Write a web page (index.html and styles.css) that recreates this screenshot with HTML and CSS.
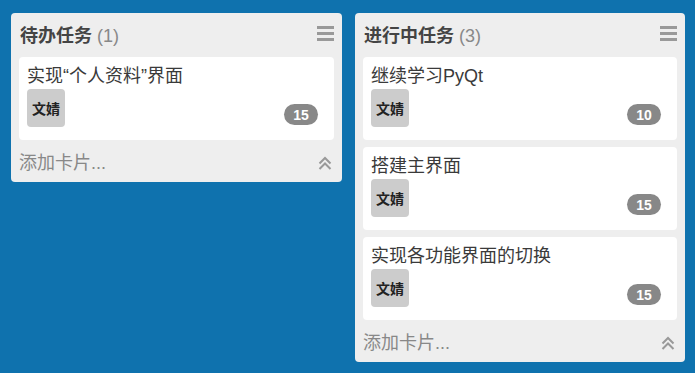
FILE: index.html
```html
<!DOCTYPE html>
<html lang="zh-CN">
<head>
  <meta charset="UTF-8">
  <title>任务看板</title>
  <link rel="stylesheet" href="styles.css">
</head>
<body>
  <div class="board">
    <div class="column col-todo">
      <div class="column-head">
        <h2>待办任务 <span class="count">(1)</span></h2>
        <span class="menu"><i></i><i></i><i></i></span>
      </div>
      <div class="cards">
        <div class="card">
          <div class="card-title">实现“个人资料”界面</div>
          <div class="card-row">
            <span class="avatar">文婧</span>
            <span class="badge">15</span>
          </div>
        </div>
      </div>
      <div class="column-foot">
        <span>添加卡片...</span>
        <svg class="fold" width="14" height="14" viewBox="0 0 14 14"><path d="M1.5 7.5 L7 2 L12.5 7.5 M1.5 13 L7 7.5 L12.5 13" fill="none" stroke="#999" stroke-width="2"/></svg>
      </div>
    </div>

    <div class="column col-doing">
      <div class="column-head">
        <h2>进行中任务 <span class="count">(3)</span></h2>
        <span class="menu"><i></i><i></i><i></i></span>
      </div>
      <div class="cards">
        <div class="card">
          <div class="card-title">继续学习PyQt</div>
          <div class="card-row">
            <span class="avatar">文婧</span>
            <span class="badge">10</span>
          </div>
        </div>
        <div class="card">
          <div class="card-title">搭建主界面</div>
          <div class="card-row">
            <span class="avatar">文婧</span>
            <span class="badge">15</span>
          </div>
        </div>
        <div class="card">
          <div class="card-title">实现各功能界面的切换</div>
          <div class="card-row">
            <span class="avatar">文婧</span>
            <span class="badge">15</span>
          </div>
        </div>
      </div>
      <div class="column-foot">
        <span>添加卡片...</span>
        <svg class="fold" width="14" height="14" viewBox="0 0 14 14"><path d="M1.5 7.5 L7 2 L12.5 7.5 M1.5 13 L7 7.5 L12.5 13" fill="none" stroke="#999" stroke-width="2"/></svg>
      </div>
    </div>
  </div>
</body>
</html>
```

FILE: styles.css
```css
body {
  margin: 0;
  background: #0f72ae;
  font-family: "Liberation Sans", "Noto Sans CJK SC", sans-serif;
  color: #333;
}
.board {
  display: flex;
  align-items: flex-start;
  gap: 13px;
  padding: 13px 10px 0 11px;
}
.column {
  width: 331px;
  background: #eeeeee;
  border-radius: 4px;
}
.col-doing {
  width: 330px;
}
.column-head {
  display: flex;
  align-items: center;
  justify-content: space-between;
  height: 41px;
  padding: 0 8px 3px 9px;
}
.column-head h2 {
  margin: 0;
  font-size: 18px;
  font-weight: bold;
  color: #444;
}
.count {
  font-weight: normal;
  color: #888;
}
.menu {
  display: flex;
  flex-direction: column;
  gap: 3px;
  width: 17px;
}
.menu i {
  display: block;
  height: 3px;
  background: #999;
}
.cards {
  display: flex;
  flex-direction: column;
  gap: 7px;
  padding: 0 8px;
}
.card {
  background: #fff;
  border-radius: 4px;
  padding: 8px 8px 13px;
  height: 62px;
}
.card-title {
  font-size: 18px;
  line-height: 22px;
  color: #3a3a3a;
}
.card-row {
  display: flex;
  align-items: flex-end;
  justify-content: space-between;
  margin-top: 2px;
}
.avatar {
  display: flex;
  align-items: center;
  justify-content: center;
  width: 38px;
  height: 38px;
  background: #cccccc;
  border-radius: 4px;
  font-size: 14px;
  font-weight: bold;
  color: #222;
}
.badge {
  display: flex;
  align-items: center;
  justify-content: center;
  width: 34px;
  height: 21px;
  margin: 0 8px 2px 0;
  background: #888;
  border-radius: 11px;
  color: #fff;
  font-size: 14px;
  font-weight: bold;
}
.column-foot {
  display: flex;
  align-items: center;
  justify-content: space-between;
  height: 42px;
  padding: 0 10px 0 8px;
  font-size: 18px;
  color: #888;
}
.fold {
  margin-top: 3px;
}
```
